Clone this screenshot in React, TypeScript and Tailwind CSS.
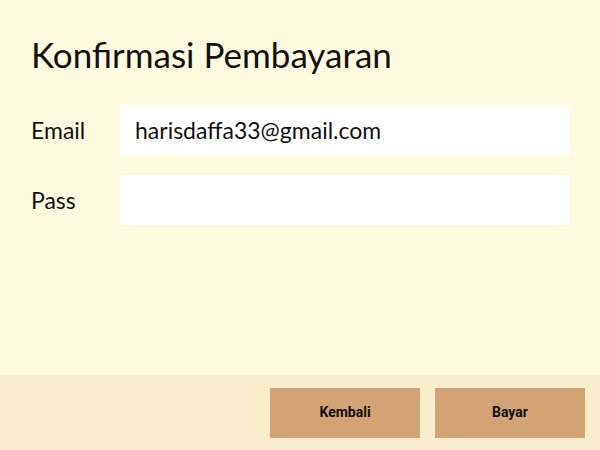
import React, { useState } from "react";

export default function App() {
  const [email, setEmail] = useState("harisdaffa33@gmail.com");
  const [pass, setPass] = useState("");

  return (
    <div className="w-[600px] h-[450px] flex flex-col bg-[#FEFAE0] text-[#111] font-['Lato','Open_Sans',sans-serif]">
      <div className="flex-1 flex flex-col px-[30px] pt-[33px]">
        <h1 className="text-[35px] leading-[42px] font-normal text-[#111] pl-[1px]">Konfirmasi Pembayaran</h1>

        <div className="mt-[30px] flex flex-col gap-[20px]">
          <div className="flex items-center">
            <label className="w-[90px] text-[23px] pl-[1px]">Email</label>
            <input
              type="text"
              value={email}
              onChange={(e) => setEmail(e.target.value)}
              className="w-[450px] h-[50px] bg-white px-[15px] text-[23px] outline-none"
            />
          </div>
          <div className="flex items-center">
            <label className="w-[90px] text-[23px] pl-[1px]">Pass</label>
            <input
              type="password"
              value={pass}
              onChange={(e) => setPass(e.target.value)}
              className="w-[450px] h-[50px] bg-white px-[15px] text-[23px] outline-none"
            />
          </div>
        </div>
      </div>

      {/* footer buttons */}
      <div className="h-[75px] bg-[#FAEDCD] flex items-center justify-end gap-[15px] pr-[15px]">
        <button className="w-[150px] h-[50px] bg-[#D4A373] text-[14px] font-bold font-['Roboto',sans-serif] text-[#111]">
          Kembali
        </button>
        <button className="w-[150px] h-[50px] bg-[#D4A373] text-[14px] font-bold font-['Roboto',sans-serif] text-[#111]">
          Bayar
        </button>
      </div>
    </div>
  );
}
